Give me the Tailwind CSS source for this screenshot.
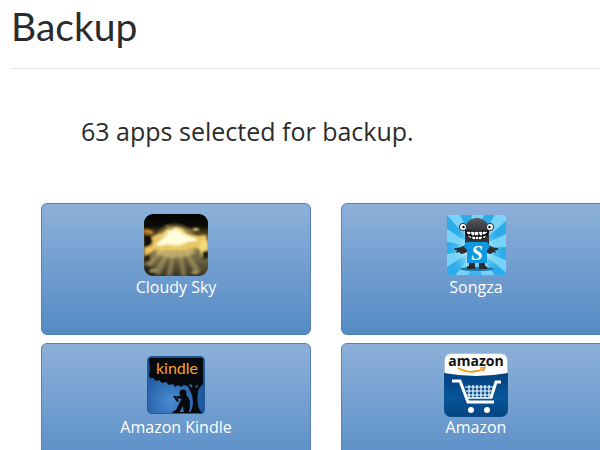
<!DOCTYPE html>
<html lang="en">
<head>
    <meta charset="UTF-8">
    <meta name="viewport" content="width=device-width, initial-scale=1.0">
    <title>Backup</title>
    <script src="https://cdn.jsdelivr.net/npm/@tailwindcss/browser@4"></script>
</head>
<body class="overflow-x-hidden bg-white pl-[11px] font-['Open_Sans',sans-serif] text-[#2b2b2b]">

    <header class="border-b border-[#e8e8e8] pt-1 pb-5">
        <h1 class="font-['Lato',sans-serif] text-[39px] leading-11">Backup</h1>
    </header>

    <main class="pt-12">
        <h2 class="pl-[70px] text-[25px] leading-7">63 apps selected for backup.</h2>

        <!-- app tiles, two per row -->
        <div class="mt-[58px] ml-[30px] grid grid-cols-[270px_270px] gap-x-[30px] gap-y-2">

            <button type="button" class="flex h-[132px] flex-col items-center rounded-md border border-[#5580b0] bg-linear-to-b from-[#8db0d9] to-[#548bc5] pt-[9px] text-base leading-5 text-white">
                <svg class="size-16" viewBox="0 0 64 64" aria-hidden="true">
                    <defs>
                        <clipPath id="skyClip"><rect width="64" height="62" y="1" rx="9"/></clipPath>
                        <linearGradient id="sky" x2="0" y2="1">
                            <stop offset="0" stop-color="#030303"/>
                            <stop offset=".2" stop-color="#0c0b08"/>
                            <stop offset=".36" stop-color="#6b5424"/>
                            <stop offset=".55" stop-color="#8a7a48"/>
                            <stop offset=".75" stop-color="#6a6040"/>
                            <stop offset="1" stop-color="#35301f"/>
                        </linearGradient>
                        <radialGradient id="sun">
                            <stop offset="0" stop-color="#fffff0"/>
                            <stop offset=".4" stop-color="#fff2a8" stop-opacity=".9"/>
                            <stop offset="1" stop-color="#dcb556" stop-opacity="0"/>
                        </radialGradient>
                        <filter id="soft"><feGaussianBlur stdDeviation=".8"/></filter>
                        <filter id="haze"><feGaussianBlur stdDeviation="1.6"/></filter>
                    </defs>
                    <g clip-path="url(#skyClip)">
                        <path d="M0 0h64v64H0z" fill="url(#sky)"/>
                        <g filter="url(#haze)" fill="#e0ca80">
                            <path d="M29 30L8 60l8 2zM31 30l-9 33h6zM34 30l3 33h6zM37 30l14 31 6-3zM26 29L2 50l4 5z" opacity=".4"/>
                            <ellipse cx="31" cy="38" rx="20" ry="7" opacity=".6"/>
                        </g>
                        <g filter="url(#soft)">
                            <path d="M0 16l6 1 4 2-2 2-8-1z" fill="#d98a30"/>
                            <path d="M8 24l6-3 6-1 3-4 9-2 7 2 6 5 9 2 8-1 2 10-5 4-9-1-8 2-10 0-9 0-7 1-8-3z" fill="#e9c763"/>
                            <path d="M1 34l6-2 5 3-4 4-7 3z" fill="#f0c45c"/>
                            <path d="M54 33l6-9 4 5v14l-6 1z" fill="#f2d877"/>
                            <path d="M47 16l6-1 3 2-5 1z" fill="#f2dc8a"/>
                            <path d="M0 22l7 1 2 6-3 4-6 2z" fill="#16100a"/>
                            <path d="M58 39l6-2v8l-5 1z" fill="#1d180e"/>
                            <path d="M0 43l5-2 1 6-6 3z" fill="#2b210f"/>
                        </g>
                        <ellipse cx="31" cy="24" rx="20" ry="15" fill="url(#sun)"/>
                        <g filter="url(#soft)">
                            <path d="M17 27l6-4 3-5 6-2 5 4 6 3 8 2 3 3-10 1-9 3-12-1-5 2-7-1z" fill="#fffde0"/>
                            <path d="M21 11l7 3 3 3-8-1zM38 17l8-1 5 5-7 0z" fill="#9a8245" opacity=".7"/>
                            <path d="M0 53l7 1 5 4-4 6H0z" fill="#23211a"/>
                            <path d="M5 57l6-1 3 2-7 1zM46 59l7-1 3 1-6 2z" fill="#b9a96a"/>
                        </g>
                    </g>
                </svg>
                Cloudy Sky
            </button>

            <button type="button" class="flex h-[132px] flex-col items-center rounded-md border border-[#5580b0] bg-linear-to-b from-[#8db0d9] to-[#548bc5] pt-[9px] text-base leading-5 text-white">
                <svg class="size-16" viewBox="0 0 64 64" aria-hidden="true">
                    <defs>
                        <clipPath id="songClip"><rect x="3" y="2" width="59" height="60" rx="1"/></clipPath>
                        <radialGradient id="songGlow">
                            <stop offset=".2" stop-color="#e4faff"/>
                            <stop offset="1" stop-color="#55c7f5" stop-opacity="0"/>
                        </radialGradient>
                        <linearGradient id="songHead" x2="0" y2="1">
                            <stop offset="0" stop-color="#5a5d60"/>
                            <stop offset=".5" stop-color="#303234"/>
                        </linearGradient>
                    </defs>
                    <g clip-path="url(#songClip)">
                        <path d="M0 0h64v64H0z" fill="#2dacea"/>
                        <path d="M32 35L3 2h13zM32 35L27 0h13zM32 35L52 0h12v6zM32 35L64 20v14zM32 35L64 48v13zM32 35L52 64H38zM32 35L24 64H10zM32 35L0 56V42zM32 35L0 28V14z" fill="#79d2f8"/>
                        <circle cx="32" cy="38" r="27" fill="url(#songGlow)"/>
                        <ellipse cx="33" cy="56" rx="17" ry="2" fill="#1676ad"/>
                        <path d="M25 49h6v7h-8q-1-3 2-3zM35 49h6v4q3 0 2 3h-8z" fill="#292a2c"/>
                        <path d="M23 30q-4 5-12 5l-1 2 3 0-1 3 3-1 2 2q6-1 8-4zM43 30q4 5 11 5l0 2-3 0 1 3-3-1-2 2q-6-1-7-4z" fill="#2d2e30"/>
                        <path d="M21 31V18C21 10 26 5 33 5s12 5 12 13v13z" fill="url(#songHead)"/>
                        <path d="M22 29h21l3 5-3 3v13H23V37l-3-3z" fill="#0f98e2"/>
                        <path d="M21 17q12 2 24 0 0 10-12 10T21 17z" fill="#080808"/>
                        <path d="M23 19h3v2h-2zM27 19h3v3h-2zM31 19h3v3h-3zM35 19h3v3h-2zM39 19h4l-2 2h-2zM24 23l3 1v1zM28 24h3v2h-2zM32 24h2v2h-2zM35 24h3l-1 2h-2zM39 24l3-1-2 2z" fill="#fff" stroke="#fff" stroke-width=".5"/>
                        <circle cx="19" cy="14" r="3.6" fill="#fff" stroke="#292b2d"/>
                        <circle cx="46" cy="14" r="3.6" fill="#fff" stroke="#292b2d"/>
                        <circle cx="19.500" cy="14" r="1.200"/><circle cx="45.500" cy="14" r="1.200"/>
                        <text x="33" y="47" text-anchor="middle" font-family="Liberation Serif" font-style="italic" font-weight="700" font-size="21" fill="#fff">S</text>
                    </g>
                </svg>
                Songza
            </button>

            <button type="button" class="flex h-[132px] flex-col items-center rounded-md border border-[#5580b0] bg-linear-to-b from-[#8db0d9] to-[#548bc5] pt-[9px] text-base leading-5 text-white">
                <svg class="size-16" viewBox="0 0 64 64" aria-hidden="true">
                    <defs>
                        <clipPath id="kindleClip"><rect x="3" y="3" width="58" height="58" rx="5"/></clipPath>
                        <radialGradient id="kindleBg" cx=".42" cy=".75" r=".6">
                            <stop offset="0" stop-color="#4a8bd2"/>
                            <stop offset="1" stop-color="#174e94"/>
                        </radialGradient>
                    </defs>
                    <g clip-path="url(#kindleClip)">
                        <path d="M0 0h64v64H0z" fill="url(#kindleBg)"/>
                        <path d="M5 5h54v26l-3 3-3-2-3 2-3-3-4 2-3-1-3 2-3-2-3 2-2-3-4 1-3-3-4 1-3-3-3 1-3-3-3 0-1-4 1-4z" fill="#07090c"/>
                        <path d="M41 29l7 6 1-5 3 5 6-5-4 8q-1 8 0 14 1 6 5 8l-1 1H45q4-5 4-12 0-9-8-20z" fill="#07090c"/>
                        <!-- reader under the tree -->
                        <circle cx="39" cy="40" r="3.500" fill="#07090c"/>
                        <path d="M41 41q5 4 5 9 0 5-1 9l-5 1-1-7-4 7h-6l-1-1 4-2 5-10 1-1-5-1 0-2 4 0 2-2z" fill="#07090c"/>
                        <path d="M29 43l3 0 3 5-2 1z" fill="#07090c"/>
                        <path d="M29 59h32v3H29z" fill="#07090c"/>
                        <text x="33" y="21" text-anchor="middle" font-family="Lato" font-size="16" fill="#f7a326">kindle</text>
                    </g>
                    <rect x="3.500" y="3.500" width="57" height="57" rx="5" fill="none" stroke="#235b99"/>
                </svg>
                Amazon Kindle
            </button>

            <button type="button" class="flex h-[132px] flex-col items-center rounded-md border border-[#5580b0] bg-linear-to-b from-[#8db0d9] to-[#548bc5] pt-[9px] text-base leading-5 text-white">
                <svg class="size-16" viewBox="0 0 64 64" aria-hidden="true">
                    <defs>
                        <clipPath id="amazonClip"><rect width="64" height="64" rx="7"/></clipPath>
                        <linearGradient id="amazonBg" x2="0" y2="1">
                            <stop offset=".35" stop-color="#034382"/>
                            <stop offset=".7" stop-color="#075499"/>
                            <stop offset="1" stop-color="#044480"/>
                        </linearGradient>
                    </defs>
                    <g clip-path="url(#amazonClip)">
                        <path d="M0 0h64v64H0z" fill="url(#amazonBg)"/>
                        <path d="M0 0h64v20Q32 26 0 20z" fill="#fff"/>
                        <text x="32" y="13" text-anchor="middle" font-family="Open Sans" font-weight="700" font-size="14" fill="#111">amazon</text>
                        <path d="M14 15q12 7 26 1" fill="none" stroke="#f49a20" stroke-width="1.800"/>
                        <path d="M36 15l5-.5-2 4" fill="none" stroke="#f49a20" stroke-width="1.500"/>
                        <!-- cart -->
                        <path d="M8 28h8l8 21h26" fill="none" stroke="#fff" stroke-width="3"/>
                        <path d="M47 45l5-16h5" fill="none" stroke="#fff" stroke-width="3"/>
                        <path d="M21 34h28M22 38h26M23 42h24" stroke="#fff" stroke-width="1.200"/>
                        <path d="M25 32v13M29 32v13M33 32v13M37 32v13M41 32v13M45 32v13" stroke="#fff" stroke-width="1.200"/>
                        <path d="M22 45h26" stroke="#fff" stroke-width="1.500"/>
                        <circle cx="27" cy="57" r="3" fill="#fff"/><circle cx="43" cy="57" r="3" fill="#fff"/>
                    </g>
                    <rect x=".5" y=".5" width="63" height="63" rx="7" fill="none" stroke="#1b5794" opacity=".35"/>
                </svg>
                Amazon
            </button>
        </div>
    </main>
</body>
</html>
